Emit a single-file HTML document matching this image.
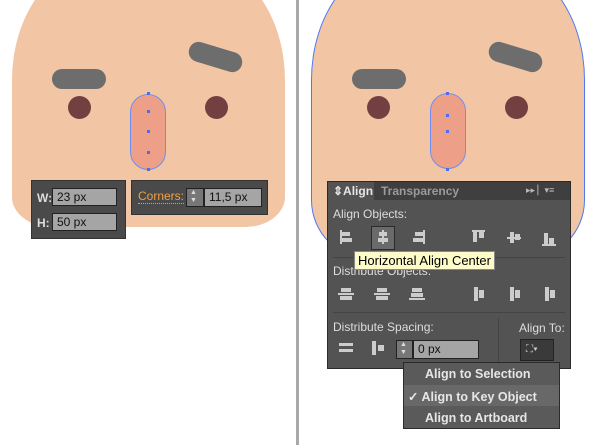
<!DOCTYPE html>
<html><head><style>
*{margin:0;padding:0;box-sizing:border-box}
body{width:600px;height:445px;background:#fff;position:relative;overflow:hidden;font-family:"Liberation Sans",sans-serif}
.a{position:absolute}
.face{background:#f2c6a4;border-radius:90px 90px 40px 40px/120px 120px 30px 30px}
.brow{background:#6d6d6d;border-radius:10px;height:20px}
.eye{background:#733f41;border-radius:50%;width:23px;height:23px}
.nose{background:#ee9f87;border-radius:18px;width:36px;height:76px;border:1px solid #6f8ff0}
.pt{width:3px;height:3px;background:#4a6ef0}
.box{background:#4a4a4a;border:1px solid #333}
.fld{background:#a5a5a5;border:1px solid #222;font-size:12px;color:#111;padding-left:4px;line-height:16px}
.lbl{color:#ddd;font-size:12px}
.ic{background:#ccc}
.mi{color:#e6e6e6;font-size:12.5px;font-weight:bold}
</style></head><body>
<div class="a face" style="left:12px;top:-40px;width:273px;height:267px"></div>
<div class="a brow" style="left:52px;top:69px;width:54px"></div>
<div class="a brow" style="left:188px;top:47px;width:55px;transform:rotate(17deg)"></div>
<div class="a eye" style="left:68px;top:96px"></div>
<div class="a eye" style="left:205px;top:96px"></div>
<div class="a nose" style="left:130px;top:94px"></div>
<div class="a pt" style="left:147px;top:92px"></div><div class="a pt" style="left:147px;top:130px"></div><div class="a pt" style="left:147px;top:110px"></div><div class="a pt" style="left:147px;top:151px"></div><div class="a pt" style="left:147px;top:168px"></div>

<div class="a" style="left:296px;top:0;width:3px;height:445px;background:#a8a8a8"></div>

<div class="a face" style="left:311px;top:-40px;width:274px;height:300px;border:1.5px solid #4f78f0;border-radius:90px 90px 60px 60px/120px 120px 60px 60px"></div>
<div class="a brow" style="left:352px;top:69px;width:54px"></div>
<div class="a brow" style="left:488px;top:47px;width:55px;transform:rotate(17deg)"></div>
<div class="a eye" style="left:367px;top:96px"></div>
<div class="a eye" style="left:505px;top:96px"></div>
<div class="a nose" style="left:430px;top:93px"></div>
<div class="a pt" style="left:446px;top:92px"></div><div class="a pt" style="left:446px;top:114px"></div><div class="a pt" style="left:446px;top:130px"></div><div class="a pt" style="left:446px;top:168px"></div>

<!-- W/H box -->
<div class="a box" style="left:31px;top:180px;width:95px;height:59px"></div>
<div class="a lbl" style="left:37px;top:191px;font-weight:bold">W:</div>
<div class="a fld" style="left:52px;top:188px;width:65px;height:18px">23 px</div>
<div class="a lbl" style="left:37px;top:216px;font-weight:bold">H:</div>
<div class="a fld" style="left:52px;top:213px;width:65px;height:18px">50 px</div>
<div class="a box" style="left:131px;top:180px;width:137px;height:35px"></div>
<div class="a" style="left:138px;top:190px;font-size:12px;color:#f0a040;border-bottom:1px dotted #f0a040;line-height:13px">Corners:</div>
<div class="a" style="left:186px;top:188px;width:18px;height:19px;background:#777;border:1px solid #222"></div>
<div class="a" style="left:190px;top:189px;font-size:7px;color:#ddd;line-height:8px">▲<br>▼</div>
<div class="a fld" style="left:204px;top:188px;width:58px;height:19px;font-size:12px">11,5 px</div>

<!-- Align panel -->
<div class="a" style="left:327px;top:181px;width:244px;height:188px;background:#535353;border:1px solid #2b2b2b"></div>
<div class="a" style="left:328px;top:182px;width:242px;height:18px;background:#3f3f3f"></div>
<div class="a" style="left:328px;top:182px;width:46px;height:19px;background:#535353"></div>
<div class="a mi" style="left:333px;top:184px;font-size:12px">⇕Align</div>
<div class="a" style="left:381px;top:184px;font-size:12px;font-weight:bold;color:#9a9a9a">Transparency</div>
<div class="a" style="left:526px;top:185px;font-size:9px;color:#bbb">▸▸ ▏▾≡</div>
<div class="a lbl" style="left:333px;top:207px">Align Objects:</div>
<div class="a" style="left:371px;top:226px;width:24px;height:24px;background:#6a6a6a;border:1px solid #2b2b2b"></div>
<div class="a ic" style="left:340px;top:230px;width:2px;height:14px"></div><div class="a ic" style="left:342px;top:232px;width:8px;height:4px"></div><div class="a ic" style="left:342px;top:238px;width:10px;height:4px"></div>
<div class="a ic" style="left:382px;top:230px;width:2px;height:14px"></div><div class="a ic" style="left:379px;top:232px;width:8px;height:4px"></div><div class="a ic" style="left:378px;top:238px;width:10px;height:4px"></div>
<div class="a ic" style="left:423px;top:230px;width:2px;height:14px"></div><div class="a ic" style="left:415px;top:232px;width:8px;height:4px"></div><div class="a ic" style="left:413px;top:238px;width:10px;height:4px"></div>
<div class="a ic" style="left:472px;top:230px;width:13px;height:2px"></div><div class="a ic" style="left:473px;top:232px;width:4px;height:10px"></div><div class="a ic" style="left:479px;top:232px;width:5px;height:6px"></div>
<div class="a ic" style="left:507px;top:237px;width:14px;height:2px"></div><div class="a ic" style="left:510px;top:232px;width:4px;height:11px"></div><div class="a ic" style="left:515px;top:234px;width:5px;height:6px"></div>
<div class="a ic" style="left:542px;top:244px;width:14px;height:2px"></div><div class="a ic" style="left:544px;top:233px;width:4px;height:11px"></div><div class="a ic" style="left:549px;top:238px;width:5px;height:6px"></div>
<div class="a" style="left:333px;top:257px;width:232px;height:1px;background:#444"></div>
<div class="a lbl" style="left:333px;top:264px">Distribute Objects:</div>
<div class="a" style="left:354px;top:251px;padding:1px 3px;background:#fdfcc8;border:1px solid #888;font-size:13px;color:#000">Horizontal Align Center</div>
<div class="a ic" style="left:338px;top:293px;width:16px;height:2px"></div><div class="a ic" style="left:341px;top:288px;width:10px;height:4px"></div><div class="a ic" style="left:340px;top:296px;width:12px;height:4px"></div>
<div class="a ic" style="left:374px;top:293px;width:16px;height:2px"></div><div class="a ic" style="left:377px;top:288px;width:10px;height:4px"></div><div class="a ic" style="left:376px;top:296px;width:12px;height:4px"></div>
<div class="a ic" style="left:409px;top:298px;width:16px;height:2px"></div><div class="a ic" style="left:412px;top:288px;width:10px;height:4px"></div><div class="a ic" style="left:411px;top:293px;width:12px;height:4px"></div>
<div class="a ic" style="left:474px;top:287px;width:4px;height:14px"></div><div class="a ic" style="left:479px;top:290px;width:5px;height:8px"></div>
<div class="a ic" style="left:510px;top:287px;width:4px;height:14px"></div><div class="a ic" style="left:515px;top:290px;width:5px;height:8px"></div>
<div class="a ic" style="left:545px;top:287px;width:4px;height:14px"></div><div class="a ic" style="left:550px;top:290px;width:5px;height:8px"></div>
<div class="a" style="left:333px;top:312px;width:232px;height:1px;background:#444"></div>
<div class="a" style="left:498px;top:318px;width:1px;height:48px;background:#444"></div>
<div class="a lbl" style="left:333px;top:320px">Distribute Spacing:</div>
<div class="a lbl" style="left:519px;top:321px">Align To:</div>
<div class="a ic" style="left:339px;top:343px;width:14px;height:9px;background:none;border-top:3px solid #ccc;border-bottom:3px solid #ccc"></div>
<div class="a ic" style="left:372px;top:341px;width:4px;height:14px"></div><div class="a ic" style="left:378px;top:345px;width:6px;height:6px"></div>
<div class="a" style="left:396px;top:340px;width:17px;height:19px;background:#777;border:1px solid #222"></div>
<div class="a" style="left:400px;top:341px;font-size:7px;color:#ddd;line-height:8px">▲<br>▼</div>
<div class="a fld" style="left:413px;top:340px;width:66px;height:19px;line-height:17px">0 px</div>
<div class="a" style="left:520px;top:339px;width:34px;height:22px;background:#3a3a3a;border:1px solid #222;color:#ccc;font-size:10px;padding:4px 0 0 5px">⛶▾</div>

<!-- dropdown -->
<div class="a" style="left:403px;top:362px;width:157px;height:67px;background:#5a5a5a;border:1px solid #2b2b2b"></div>
<div class="a" style="left:404px;top:385px;width:155px;height:21px;background:#686868"></div>
<div class="a mi" style="left:425px;top:367px">Align to Selection</div>
<div class="a mi" style="left:408px;top:389px">✓ Align to Key Object</div>
<div class="a mi" style="left:425px;top:411px">Align to Artboard</div>
</body></html>
